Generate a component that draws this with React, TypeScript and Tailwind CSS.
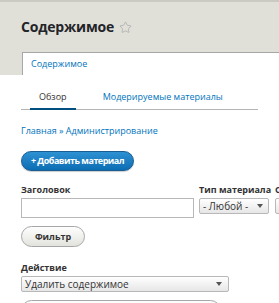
import { Star } from 'lucide-react';

export default function App() {
    return (
        <div className="w-[279px] h-[303px] overflow-hidden bg-white font-['Open_Sans',sans-serif] text-[#333]">
            {/* Header */}
            <div className="bg-[#e0e0d8] border-t-2 border-[#cacac2]">
                <div className="flex items-center gap-[5px] pl-[21px] h-[50px]">
                    <h1 className="text-[14px] leading-[16px] font-bold text-[#232429] tracking-[-0.2px]">Содержимое</h1>
                    <Star className="w-[13px] h-[13px] text-[#a0a0a0]" strokeWidth={1.2} />
                </div>
                <div className="pl-[22px] h-[23px]">
                    <div className="h-full bg-white border-t border-l border-[#a6a6a6] pl-[8px] flex items-center">
                        <span className="text-[9px] leading-[12px] text-[#0074bd]">Содержимое</span>
                    </div>
                </div>
            </div>

            <div className="px-[21px]">
                {/* Secondary tabs */}
                <div className="flex items-end border-b border-[#b4b4b4] h-[35px] text-[9px] leading-[12px]">
                    <div className="relative ml-[9px] px-[9px] pb-[6px]">
                        <span className="text-[#333]">Обзор</span>
                        <div className="absolute left-0 right-0 -bottom-[1px] h-[2px] bg-[#004f80]" />
                    </div>
                    <span className="ml-[27px] pb-[6px] text-[#0074bd]">Модерируемые материалы</span>
                </div>

                {/* Breadcrumb */}
                <div className="mt-[15px] text-[9px] leading-[12px] text-[#0074bd]">Главная » Администрирование</div>

                {/* Add button */}
                <button className="mt-[14px] h-[20px] w-[113px] rounded-full bg-gradient-to-b from-[#2d91d2] to-[#0a6db3] border border-[#1a5d92] text-white text-[9px] leading-[12px] font-bold tracking-[-0.5px] flex items-center justify-center shadow-[0_1px_1px_rgba(0,0,0,0.2)] whitespace-nowrap">
                    + Добавить материал
                </button>

                {/* Filters */}
                <div className="mt-[13px] flex text-[9px] leading-[12px]">
                    <div className="flex flex-col gap-[2px]">
                        <span className="font-bold text-[#333]">Заголовок</span>
                        <div className="w-[173px] h-[20px] border border-[#b8b8b8] bg-white" />
                    </div>
                    <div className="ml-[5px] flex flex-col gap-[2px]">
                        <span className="font-bold text-[#333] whitespace-nowrap">Тип материала</span>
                        <div className="w-[70px] h-[16px] border border-[#b8b8b8] rounded-[2px] bg-gradient-to-b from-white to-[#e6e6e6] flex items-center justify-between pl-[3px] pr-[5px]">
                            <span className="text-[10px] text-[#333]">- Любой -</span>
                            <svg width="6" height="4" viewBox="0 0 6 4"><path d="M0 0h6L3 4z" fill="#555" /></svg>
                        </div>
                    </div>
                    <div className="ml-[4px] flex flex-col gap-[2px]">
                        <span className="font-bold text-[#333]">С</span>
                        <div className="w-[70px] h-[16px] border border-[#b8b8b8] rounded-[2px] bg-gradient-to-b from-white to-[#e6e6e6]" />
                    </div>
                </div>

                <button className="mt-[8px] h-[21px] w-[64px] rounded-full border border-[#a6a6a6] bg-gradient-to-b from-[#fefefe] to-[#e3e3dd] text-[9px] leading-[12px] font-bold text-[#333] flex items-center justify-center">
                    Фильтр
                </button>

                {/* Action */}
                <div className="mt-[15px] text-[9px] leading-[12px]">
                    <div className="font-bold text-[#333]">Действие</div>
                    <div className="mt-[2px] w-[208px] h-[16px] border border-[#b8b8b8] rounded-[2px] bg-gradient-to-b from-white to-[#e6e6e6] flex items-center justify-between pl-[3px] pr-[6px]">
                        <span className="text-[10px] text-[#333]">Удалить содержимое</span>
                        <svg width="6" height="4" viewBox="0 0 6 4"><path d="M0 0h6L3 4z" fill="#555" /></svg>
                    </div>
                    <div className="mt-[8px] w-[200px] h-[21px] rounded-full border border-[#a6a6a6] bg-gradient-to-b from-[#fefefe] to-[#e3e3dd]" />
                </div>
            </div>
        </div>
    );
}
